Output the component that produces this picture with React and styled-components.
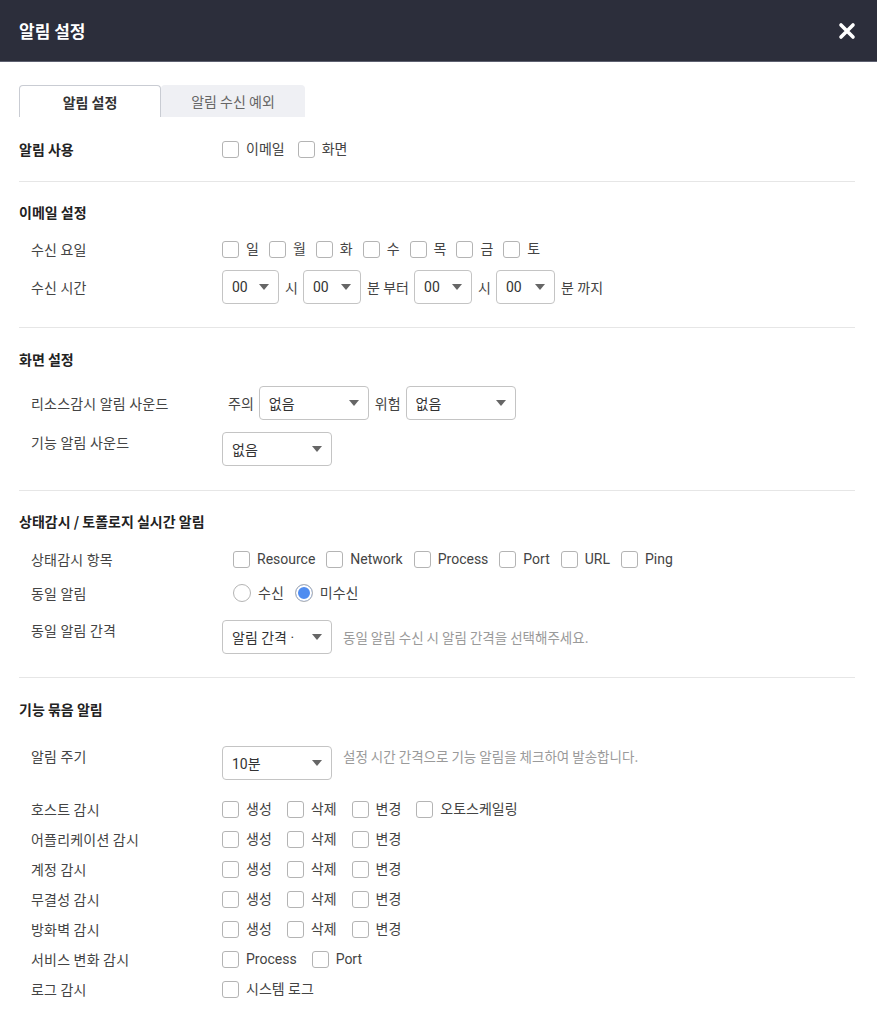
import styled, { createGlobalStyle } from "styled-components";

const GlobalStyle = createGlobalStyle`
  body {
    margin: 0;
    background: #fff;
    font-family: Roboto, "Noto Sans CJK KR", sans-serif;
    color: #444;
  }
`;

const Modal = styled.div`
  width: 877px;
  min-height: 1024px;
  background: #fff;
`;

const Header = styled.div`
  height: 62px;
  background: #2c2e3b;
  border-bottom: 1px solid #5d6070;
  box-sizing: border-box;
  display: flex;
  align-items: center;
  justify-content: space-between;
  padding: 0 20px 0 19px;
`;

const Title = styled.h2`
  margin: 0;
  font-size: 17px;
  font-weight: 700;
  color: #fff;
  font-family: "Noto Sans CJK KR", sans-serif;
`;

const CloseButton = styled.button`
  border: none;
  background: none;
  padding: 0;
  width: 20px;
  height: 20px;
  display: flex;
  align-items: center;
  justify-content: center;
  cursor: pointer;
`;

const Body = styled.div`
  padding: 23px 22px 0 19px;
`;

const Tabs = styled.div`
  display: flex;
  height: 32px;
`;

const Tab = styled.div`
  width: ${(p) => (p.$active ? "142px" : "144px")};
  box-sizing: border-box;
  display: flex;
  align-items: center;
  justify-content: center;
  font-size: 14px;
  font-family: "Noto Sans CJK KR", sans-serif;
  border-radius: 4px 4px 0 0;
  color: ${(p) => (p.$active ? "#333" : "#666")};
  font-weight: ${(p) => (p.$active ? 600 : 400)};
  background: ${(p) => (p.$active ? "#fff" : "#eff0f4")};
  border: ${(p) => (p.$active ? "1px solid #c9ccd3" : "none")};
  border-bottom: none;
`;

const Section = styled.section`
  padding: ${(p) => p.$pad || "20px 0 23px"};
  border-bottom: ${(p) => (p.$last ? "none" : "1px solid #e6e6e6")};
`;

const SectionTitle = styled.h3`
  margin: 0;
  font-size: 14px;
  line-height: 20px;
  font-weight: 700;
  color: #222;
  font-family: "Noto Sans CJK KR", sans-serif;
`;

const Row = styled.div`
  display: flex;
  align-items: ${(p) => p.$align || "center"};
  margin-top: ${(p) => p.$mt || 0}px;
`;

const RowLabel = styled.div`
  width: ${(p) => (p.$main ? "203px" : "191px")};
  margin-left: ${(p) => (p.$main ? 0 : 12)}px;
  flex-shrink: 0;
  font-size: 14px;
  line-height: 20px;
  letter-spacing: ${(p) => (p.$main ? 0 : 0.2)}px;
  font-weight: ${(p) => (p.$main ? 700 : 400)};
  color: ${(p) => (p.$main ? "#222" : "#444")};
  font-family: "Noto Sans CJK KR", sans-serif;
`;

const Controls = styled.div`
  display: flex;
  align-items: ${(p) => p.$align || "center"};
  padding-left: ${(p) => p.$indent || 0}px;
`;

const CheckItem = styled.label`
  display: flex;
  align-items: center;
  gap: 7px;
  margin-right: ${(p) => p.$gap || 11}px;
  font-size: 14px;
  line-height: 20px;
  color: #444;
`;

const Box = styled.span`
  width: 17px;
  height: 17px;
  box-sizing: border-box;
  border: 1px solid #b4b4b4;
  border-radius: 3px;
  background: #fff;
  flex-shrink: 0;
`;

const Radio = styled.span`
  width: 18px;
  height: 18px;
  box-sizing: border-box;
  border-radius: 50%;
  border: 1px solid #b4b4b4;
  background: ${(p) => (p.$checked ? "#4f8cf0" : "#fff")};
  box-shadow: ${(p) => (p.$checked ? "inset 0 0 0 2px #fff" : "none")};
  flex-shrink: 0;
`;

const SelectBox = styled.div`
  width: ${(p) => p.$w}px;
  height: 34px;
  box-sizing: border-box;
  border: 1px solid #c4c4c4;
  border-radius: 4px;
  display: flex;
  align-items: center;
  justify-content: space-between;
  padding: 0 9px;
  font-size: 14px;
  color: #333;
  background: #fff;
  flex-shrink: 0;
  span {
    white-space: nowrap;
    overflow: hidden;
  }
`;

const Caret = styled.i`
  width: 0;
  height: 0;
  border-left: 5px solid transparent;
  border-right: 5px solid transparent;
  border-top: 6px solid #666;
  flex-shrink: 0;
  margin-left: 4px;
`;

const Unit = styled.span`
  margin: 0 5px 0 6px;
  font-size: 14px;
  color: #444;
  white-space: nowrap;
`;

const Hint = styled.span`
  margin-left: 11px;
  font-size: 13.5px;
  line-height: 20px;
  color: #9a9a9a;
  font-family: "Noto Sans CJK KR", sans-serif;
`;

const Select = ({ w, value }) => (
  <SelectBox $w={w}>
    <span>{value}</span>
    <Caret />
  </SelectBox>
);

const Checks = ({ items, gap, indent }) => (
  <Controls $indent={indent}>
    {items.map((t) => (
      <CheckItem key={t} $gap={gap}>
        <Box />
        {t}
      </CheckItem>
    ))}
  </Controls>
);

const CRUD = ["생성", "삭제", "변경"];

const groupRows = [
  ["호스트 감시", [...CRUD, "오토스케일링"]],
  ["어플리케이션 감시", CRUD],
  ["계정 감시", CRUD],
  ["무결성 감시", CRUD],
  ["방화벽 감시", CRUD],
  ["서비스 변화 감시", ["Process", "Port"]],
  ["로그 감시", ["시스템 로그"]],
];

const App = () => (
  <Modal>
    <GlobalStyle />
    <Header>
      <Title>알림 설정</Title>
      <CloseButton aria-label="닫기">
        <svg width="18" height="18" viewBox="0 0 18 18">
          <path d="M3 3L15 15M15 3L3 15" stroke="#fff" strokeWidth="3.6" strokeLinecap="round" />
        </svg>
      </CloseButton>
    </Header>
    <Body>
      <Tabs>
        <Tab $active>알림 설정</Tab>
        <Tab>알림 수신 예외</Tab>
      </Tabs>

      <Section $pad="22px 0 22px">
        <Row>
          <RowLabel $main>알림 사용</RowLabel>
          <Checks items={["이메일", "화면"]} gap={13} />
        </Row>
      </Section>

      <Section>
        <SectionTitle>이메일 설정</SectionTitle>
        <Row $mt={17}>
          <RowLabel>수신 요일</RowLabel>
          <Checks items={["일", "월", "화", "수", "목", "금", "토"]} gap={10} />
        </Row>
        <Row $mt={11}>
          <RowLabel>수신 시간</RowLabel>
          <Controls>
            <Select w={57} value="00" />
            <Unit>시</Unit>
            <Select w={58} value="00" />
            <Unit>분 부터</Unit>
            <Select w={58} value="00" />
            <Unit>시</Unit>
            <Select w={59} value="00" />
            <Unit>분 까지</Unit>
          </Controls>
        </Row>
      </Section>

      <Section $pad="21px 0 24px">
        <SectionTitle>화면 설정</SectionTitle>
        <Row $mt={17}>
          <RowLabel>리소스감시 알림 사운드</RowLabel>
          <Controls>
            <Unit>주의</Unit>
            <Select w={110} value="없음" />
            <Unit>위험</Unit>
            <Select w={110} value="없음" />
          </Controls>
        </Row>
        <Row $mt={12} $align="flex-start">
          <RowLabel>기능 알림 사운드</RowLabel>
          <Select w={110} value="없음" />
        </Row>
      </Section>

      <Section>
        <SectionTitle>상태감시 / 토폴로지 실시간 알림</SectionTitle>
        <Row $mt={18}>
          <RowLabel>상태감시 항목</RowLabel>
          <Checks items={["Resource", "Network", "Process", "Port", "URL", "Ping"]} gap={11} indent={11} />
        </Row>
        <Row $mt={14}>
          <RowLabel>동일 알림</RowLabel>
          <Controls $indent={11}>
            <CheckItem $gap={11}>
              <Radio />
              수신
            </CheckItem>
            <CheckItem>
              <Radio $checked />
              미수신
            </CheckItem>
          </Controls>
        </Row>
        <Row $mt={17} $align="flex-start">
          <RowLabel>동일 알림 간격</RowLabel>
          <Controls>
            <Select w={110} value="알림 간격 ·" />
            <Hint>동일 알림 수신 시 알림 간격을 선택해주세요.</Hint>
          </Controls>
        </Row>
      </Section>

      <Section $last $pad="21px 0 20px">
        <SectionTitle>기능 묶음 알림</SectionTitle>
        <Row $mt={27} $align="flex-start">
          <RowLabel>알림 주기</RowLabel>
          <Controls $align="flex-start">
            <Select w={110} value="10분" />
            <Hint>설정 시간 간격으로 기능 알림을 체크하여 발송합니다.</Hint>
          </Controls>
        </Row>
        {groupRows.map(([label, items], i) => (
          <Row key={label} $mt={i === 0 ? 19 : 10}>
            <RowLabel>{label}</RowLabel>
            <Checks items={items} gap={15} />
          </Row>
        ))}
      </Section>
    </Body>
  </Modal>
);

export default App;
